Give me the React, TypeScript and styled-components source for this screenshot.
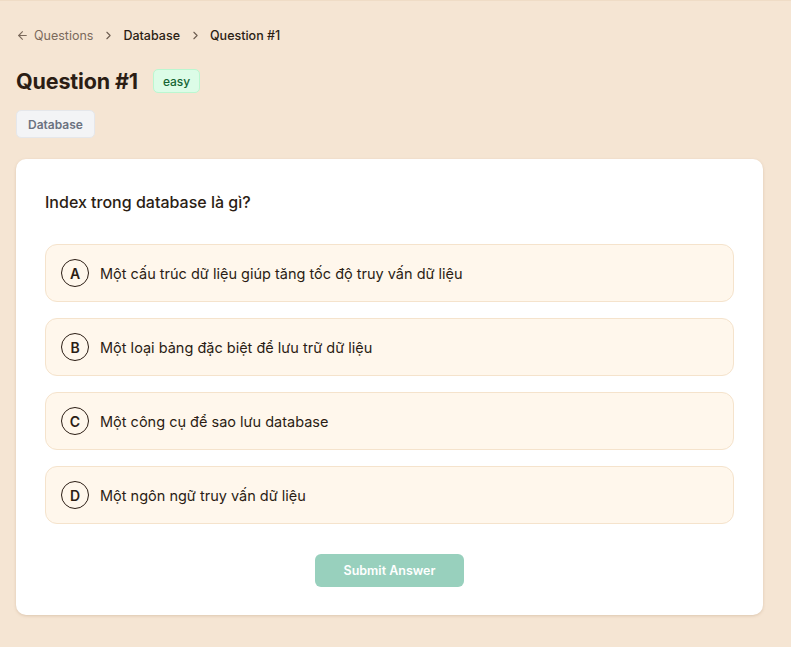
import React from "react";
import styled, { createGlobalStyle } from "styled-components";

const Global = createGlobalStyle`
  html, body { margin: 0; padding: 0; background: #f5e5d3; }
  body { font-family: Inter, "Noto Sans", sans-serif; color: #2b1d14; -webkit-font-smoothing: antialiased; }
  * { box-sizing: border-box; }
`;

const Page = styled.div`
  min-height: 647px;
  padding: 25px 28px 32px 16px;
  border-top: 1px solid #efdcc6;
`;

const Crumbs = styled.nav`
  display: flex;
  align-items: center;
  gap: 8.5px;
  font-size: 12.5px;
  height: 18px;
`;

const Back = styled.span`
  display: inline-flex;
  align-items: center;
  gap: 5px;
  color: #7b6a5c;
`;

const Crumb = styled.span`
  color: #2b1d14;
  font-weight: 500;
`;

const Sep = styled.span`
  display: inline-flex;
  color: #6d5d50;
`;

const TitleRow = styled.div`
  display: flex;
  align-items: center;
  gap: 15px;
  margin-top: 23px;
`;

const Title = styled.h1`
  margin: 0;
  font-size: 21.5px;
  font-weight: 700;
  letter-spacing: -0.15px;
  color: #2b1d14;
  line-height: 28px;
`;

const Badge = styled.span`
  display: inline-flex;
  align-items: center;
  height: 24px;
  padding: 0 9px;
  border-radius: 5px;
  background: #dcfce7;
  border: 1px solid #bbf7d0;
  color: #166534;
  font-size: 12px;
  font-weight: 500;
`;

const Tag = styled.span`
  display: inline-flex;
  align-items: center;
  height: 28px;
  padding: 0 11px;
  margin-top: 15px;
  border-radius: 5px;
  background: #f3f4f6;
  border: 1px solid #e5e7eb;
  color: #6b7280;
  font-size: 12px;
  font-weight: 600;
`;

const Card = styled.section`
  margin-top: 21px;
  width: 747px;
  background: #fff;
  border-radius: 10px;
  box-shadow: 0 1px 3px rgba(150, 110, 70, 0.25);
  padding: 32px 29px 28px 29px;
  display: flex;
  flex-direction: column;
`;

const Question = styled.h2`
  margin: 0;
  font-size: 16px;
  font-weight: 500;
  color: #2b1d14;
  line-height: 22px;
`;

const Options = styled.div`
  display: flex;
  flex-direction: column;
  gap: 16px;
  margin-top: 31px;
`;

const Option = styled.div`
  display: flex;
  align-items: center;
  gap: 11px;
  height: 58px;
  padding: 0 15px;
  background: #fff7ec;
  border: 1px solid #f5e3cc;
  border-radius: 12px;
  font-size: 14.5px;
  color: #2b1d14;
`;

const Letter = styled.span`
  width: 28px;
  height: 28px;
  border-radius: 50%;
  border: 1.5px solid #2b1d14;
  display: inline-flex;
  align-items: center;
  justify-content: center;
  font-size: 14px;
  font-weight: 600;
  flex-shrink: 0;
`;

const Submit = styled.button`
  align-self: center;
  margin-top: 30px;
  width: 149px;
  height: 33px;
  border: none;
  border-radius: 6px;
  background: #98d0bd;
  color: #fff;
  font-family: inherit;
  font-size: 12.5px;
  font-weight: 600;
`;

const ArrowLeft = () => (
  <svg width="13" height="13" viewBox="0 0 24 24" fill="none" stroke="currentColor" strokeWidth="2" strokeLinecap="round" strokeLinejoin="round">
    <path d="M19 12H5" />
    <path d="M12 19l-7-7 7-7" />
  </svg>
);

const Chevron = () => (
  <svg width="13" height="13" viewBox="0 0 24 24" fill="none" stroke="currentColor" strokeWidth="2" strokeLinecap="round" strokeLinejoin="round">
    <path d="M9 18l6-6-6-6" />
  </svg>
);

const options = [
  { k: "A", t: "Một cấu trúc dữ liệu giúp tăng tốc độ truy vấn dữ liệu" },
  { k: "B", t: "Một loại bảng đặc biệt để lưu trữ dữ liệu" },
  { k: "C", t: "Một công cụ để sao lưu database" },
  { k: "D", t: "Một ngôn ngữ truy vấn dữ liệu" },
];

export default function App() {
  return (
    <>
      <Global />
      <Page>
        <Crumbs>
          <Back>
            <ArrowLeft />
            Questions
          </Back>
          <Sep><Chevron /></Sep>
          <Crumb>Database</Crumb>
          <Sep><Chevron /></Sep>
          <Crumb>Question #1</Crumb>
        </Crumbs>
        <TitleRow>
          <Title>Question #1</Title>
          <Badge>easy</Badge>
        </TitleRow>
        <Tag>Database</Tag>
        <Card>
          <Question>Index trong database là gì?</Question>
          <Options>
            {options.map((o) => (
              <Option key={o.k}>
                <Letter>{o.k}</Letter>
                {o.t}
              </Option>
            ))}
          </Options>
          <Submit>Submit Answer</Submit>
        </Card>
      </Page>
    </>
  );
}
